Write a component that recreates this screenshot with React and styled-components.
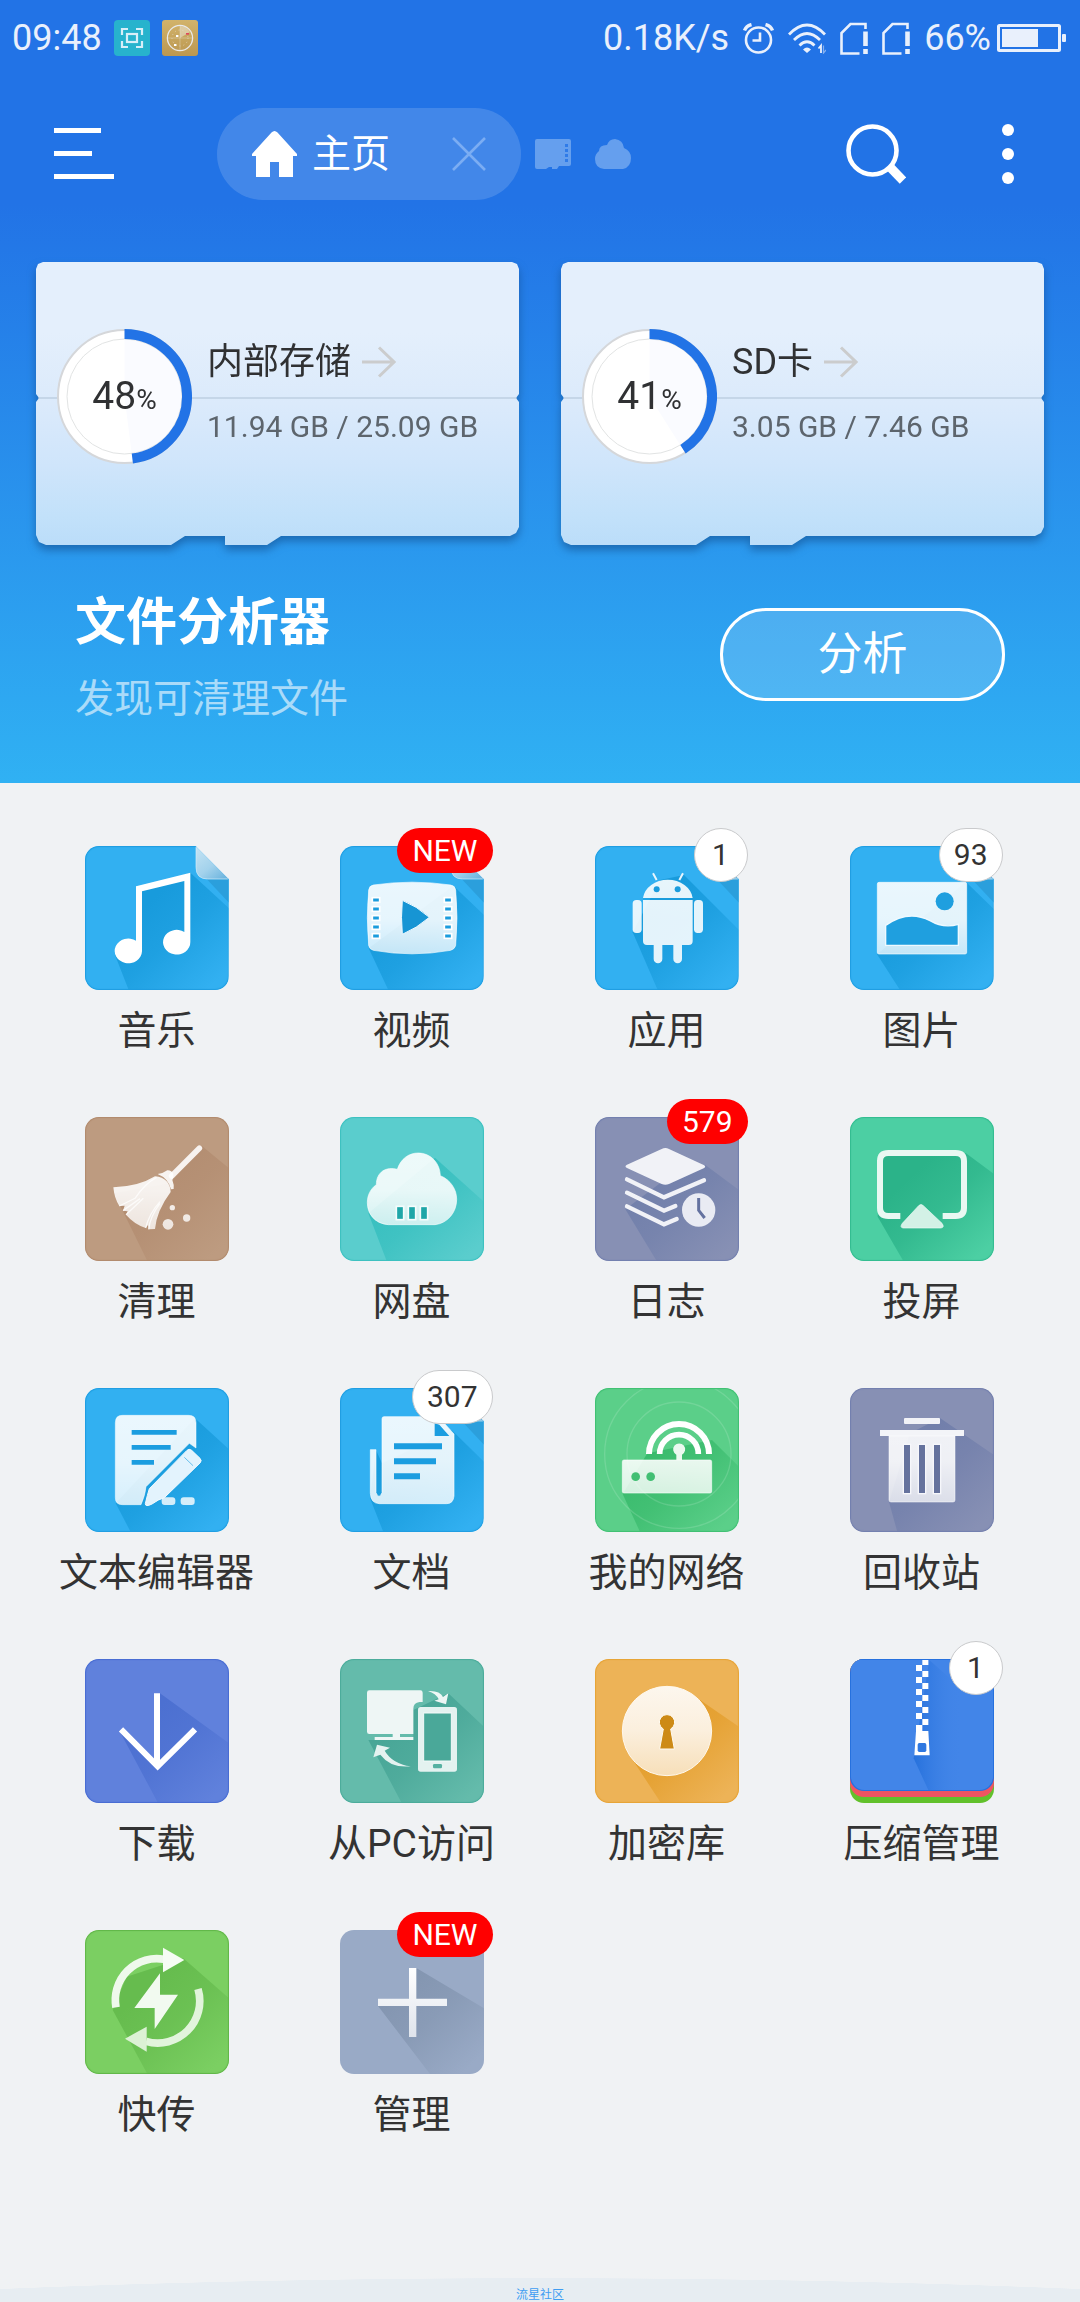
import React from "react";
import styled, { createGlobalStyle } from "styled-components";

const GlobalStyle = createGlobalStyle`
  * { box-sizing: border-box; }
  body {
    margin: 0;
    background: #f0f2f4;
    color: #333;
    font-family: Roboto, "Noto Sans CJK SC", sans-serif;
  }
  button { font: inherit; color: inherit; background: none; border: 0; padding: 0; cursor: pointer; }
  a { color: inherit; text-decoration: none; }
  svg { display: block; }
`;

const Page = styled.div`
  min-height: 100vh;
  display: flex;
  flex-direction: column;
`;

/* ---------- header ---------- */

const Header = styled.header`
  color: #fff;
  background: linear-gradient(#2273e6 26%, #30b1f3);
  padding-bottom: 60px;
`;

const StatusBar = styled.div`
  height: 76px;
  padding: 0 13px 0 12px;
  display: flex;
  align-items: center;
  justify-content: space-between;
  color: #e9f0fc;
  font-size: 36px;
  line-height: 42px;
`;

const StatusGroup = styled.div`
  display: flex;
  align-items: center;
  gap: ${(p) => p.$gap}px;
`;

const Toolbar = styled.nav`
  padding: 32px 66px 62px 54px;
  display: flex;
  align-items: center;
`;

const Tabs = styled.div`
  flex: 1;
  margin-left: 103px;
  display: flex;
  align-items: center;
  gap: 14px;
`;

const ActiveTab = styled.div`
  height: 92px;
  padding: 0 35px;
  border-radius: 46px;
  background: rgba(255, 255, 255, 0.15);
  display: flex;
  align-items: center;
  gap: 62px;
`;

const TabLabel = styled.button`
  display: flex;
  align-items: center;
  gap: 15px;
  font-size: 39px;
  line-height: 48px;
`;

const OtherTabs = styled.div`
  display: flex;
  gap: 24px;
`;

const Actions = styled.div`
  display: flex;
  align-items: center;
  gap: 96px;
`;

/* ---------- storage ---------- */

const Storage = styled.section`
  padding: 0 36px;
  display: grid;
  grid-template-columns: 1fr 1fr;
  gap: 42px;
`;

const CardShadow = styled.a`
  display: block;
  filter: drop-shadow(0 5px 4px rgba(16, 76, 140, 0.6));
`;

const Card = styled.div`
  height: 283px;
  padding: 0 21px 15px;
  display: flex;
  align-items: center;
  gap: 15px;
  color: #303133;
  background:
    linear-gradient(#c5d6e8, #c5d6e8) 0 135px / 100% 2px no-repeat,
    linear-gradient(#e4effc 25%, #dbeafb 50%, #cfe5fb 72%, #c2e1fa 90%, #bbddf9);
  clip-path: polygon(
    0 7px, 2px 2px, 7px 0,
    calc(100% - 7px) 0, calc(100% - 2px) 2px, 100% 7px,
    100% 132px, calc(100% - 3px) 136px, 100% 140px,
    100% 265px, calc(100% - 3px) 271px, calc(100% - 9px) 274px,
    245px 274px, 231px 283px, 189px 283px, 189px 274px, 149px 274px, 135px 283px,
    10px 283px, 3px 280px, 0 273px,
    0 140px, 3px 136px, 0 132px
  );
`;

const Dial = styled.div`
  display: grid;
  place-items: center;
  > * { grid-area: 1 / 1; }
`;

const Percent = styled.span`
  padding-top: 4px;
  font-size: 39px;
  line-height: 48px;
  small { font-size: 28px; }
`;

const CardName = styled.div`
  display: flex;
  align-items: center;
  gap: 11px;
  font-size: 36px;
  line-height: 42px;
`;

const CardUsage = styled.div`
  margin-top: 20px;
  color: #5d656d;
  font-size: 30px;
  line-height: 48px;
  white-space: nowrap;
`;

/* ---------- analyzer ---------- */

const Analyzer = styled.section`
  margin-top: 48px;
  padding: 0 75px;
  display: flex;
  align-items: flex-start;
  justify-content: space-between;
`;

const Title = styled.h1`
  margin: 0 0 22px;
  font-size: 51px;
  line-height: 60px;
  font-weight: 700;
`;

const Subtitle = styled.p`
  margin: 0;
  font-size: 39px;
  line-height: 48px;
  color: rgba(255, 255, 255, 0.6);
`;

const AnalyzeButton = styled.button`
  && {
    width: 285px;
    height: 93px;
    margin-top: 15px;
    border: 3px solid #fff;
    border-radius: 46px;
    background: rgba(255, 255, 255, 0.16);
    font-size: 45px;
    line-height: 48px;
  }
`;

/* ---------- app grid ---------- */

const Grid = styled.main`
  padding: 63px 31px 63px 29px;
  display: grid;
  grid-template-columns: repeat(4, 1fr);
  row-gap: 55px;
`;

const Entry = styled.button`
  display: flex;
  flex-direction: column;
  align-items: center;
  gap: 17px;
  font-size: 39px;
  line-height: 48px;
`;

const EntryLabel = styled.span`
  height: 55px;
  line-height: 48px;
  white-space: nowrap;
`;

const TileFrame = styled.span`
  position: relative;
  display: block;
`;

const Tile = styled.span`
  position: relative;
  display: block;
  width: 144px;
  height: 144px;
  overflow: hidden;
  border-radius: 14px;
  background: ${(p) => p.$bg};
  ${(p) => p.$fold && "clip-path: polygon(0 0, 111px 0, 144px 33px, 144px 144px, 0 144px);"}
  &::after {
    content: "";
    position: absolute;
    inset: 0;
    border-radius: 14px;
    box-shadow: ${(p) => (p.$edge ? `inset 0 0 1px 1px ${p.$edge}` : "none")};
  }
`;

const Badge = styled.span`
  position: absolute;
  top: -18px;
  right: -9px;
  min-width: 54px;
  height: ${(p) => (p.$alert ? 45 : 54)}px;
  padding: 0 ${(p) => (p.$alert ? 15 : 14)}px;
  border: ${(p) => (p.$alert ? "0" : "1px solid #c9cacc")};
  border-radius: 27px;
  display: grid;
  place-items: center;
  background: ${(p) => (p.$alert ? "#f00" : "#fff")};
  color: ${(p) => (p.$alert ? "#fff" : "#333")};
  font-size: 30px;
  line-height: 36px;
`;

const Footer = styled.footer`
  margin-top: auto;
  padding-top: 10px;
  text-align: center;
  color: #3f9df2;
  font-size: 12px;
  line-height: 14px;
  background: radial-gradient(ellipse 150% 190px at 50% 190px, #e7edf2 99.8%, transparent);
`;

/* ---------- header icons ---------- */

const ScanIcon = () => (
  <svg width="36" height="36" viewBox="0 0 36 36" fill="none">
    <rect width="36" height="36" rx="4" fill="#27b3cd" />
    <g stroke="#d8eef8" strokeWidth="2.2">
      <path d="M8 15V9H14M22 9H28V15M28 21V27H22M14 27H8V21" />
      <rect x="13" y="14" width="10" height="8" />
    </g>
  </svg>
);

const RadarIcon = () => (
  <svg width="36" height="36" viewBox="0 0 36 36" fill="none">
    <defs>
      <linearGradient id="gold" x2="0" y2="1">
        <stop stopColor="#d2b36b" />
        <stop offset="1" stopColor="#bb9750" />
      </linearGradient>
    </defs>
    <rect width="36" height="36" rx="3" fill="url(#gold)" />
    <path d="M18 18V6A12 12 0 0 1 28 12Z" fill="#e8e0cc" opacity=".6" />
    <path d="M18 5V31M5 18H31" stroke="#e8e0cc" opacity=".4" />
    <circle cx="18" cy="18" r="8" stroke="#e8e0cc" strokeDasharray="1 3" opacity=".7" />
    <circle cx="18" cy="18" r="12.6" stroke="#e9e9ea" strokeWidth="1.3" />
    <rect x="14" y="15" width="2.4" height="2" fill="#fff" />
    <rect x="12" y="24" width="2.4" height="2" fill="#fff" />
    <rect x="24" y="13" width="3" height="1.6" fill="#e0455c" />
  </svg>
);

const AlarmIcon = () => (
  <svg width="31" height="31" viewBox="0 0 31 31" fill="none" stroke="#e9f0fc">
    <circle cx="15.5" cy="17" r="12.5" strokeWidth="2.6" />
    <path d="M17 9.5V17.5H9.5" strokeWidth="2.6" />
    <path d="M1.5 7.5Q3 3 8.5 1.5M22.5 1.5Q28 3 29.5 7.5" strokeWidth="3.4" />
  </svg>
);

const WifiIcon = () => (
  <svg width="38" height="31" viewBox="0 0 38 31" fill="none" stroke="#e9f0fc" strokeWidth="2.8">
    <path d="M1 11.5Q19 -7.5 37 11.5M6 17Q19 4 32 17M11.5 22.5Q19 15 26.5 22.5" />
    <path d="M19 30L15 26.5Q19 22.5 23 26.5Z" fill="#e9f0fc" stroke="none" />
    <path d="M30.5 25.5L33 22.5V30" strokeWidth="1.8" />
    <path d="M35.5 22.5V30L38 27" strokeWidth="1.2" opacity=".5" />
  </svg>
);

const SimIcon = () => (
  <svg width="28" height="33" viewBox="0 0 28 33" fill="none" stroke="#e9f0fc" strokeWidth="2.6">
    <path d="M25.5 7V2H10.5L1.5 11V31.5H19.5" />
    <path d="M25.5 9.5V24" strokeWidth="4.6" />
    <path d="M25.5 27V32" strokeWidth="4.6" />
  </svg>
);

const BatteryIcon = () => (
  <svg width="70" height="28" viewBox="0 0 70 28" fill="#e9f0fc">
    <rect x="1.5" y="1.5" width="61" height="25" fill="none" stroke="#e9f0fc" strokeWidth="3" rx="1" />
    <rect x="5" y="5" width="36" height="18" />
    <rect x="65" y="10" width="4" height="8" rx="1" />
  </svg>
);

const MenuIcon = () => (
  <svg width="60" height="52" viewBox="0 0 60 52" fill="#fff">
    <rect width="47" height="5" />
    <rect y="23" width="38" height="5" />
    <rect y="46" width="60" height="5" />
  </svg>
);

const HomeIcon = () => (
  <svg width="45" height="46" viewBox="0 0 45 46" fill="#fff">
    <path d="M22.5 0Q24 0 25.5 1.5L45 23V25H41V46H27V31H18V46H4V25H0V23L19.5 1.5Q21 0 22.5 0Z" />
  </svg>
);

const CloseIcon = () => (
  <svg width="34" height="34" viewBox="0 0 34 34" stroke="#7badf3" strokeWidth="2.6">
    <path d="M1 1L33 33M33 1L1 33" />
  </svg>
);

const SdIcon = () => (
  <svg width="36" height="30" viewBox="0 0 36 30" fill="#659fee">
    <path d="M2 0H34Q36 0 36 2V25Q36 27 34 27H24L22 30H17V28H14L11 30H2Q0 30 0 28V2Q0 0 2 0Z" />
    <path d="M30 5H33V8H30ZM30 10H33V13H30ZM30 15H33V18H30ZM30 20H33V23H30Z" fill="#2f7be8" />
  </svg>
);

const CloudIcon = () => (
  <svg width="36" height="30" viewBox="0 0 36 30" fill="#659fee">
    <path d="M9 30Q0 29 0 20Q0 15 4 12Q4 6 12 6Q14 0 20 0Q28 1 29 9Q36 12 36 19Q36 28 28 30Z" />
  </svg>
);

const SearchIcon = () => (
  <svg width="60" height="60" viewBox="0 0 60 60" fill="none" stroke="#fff">
    <circle cx="26.5" cy="26.5" r="24" strokeWidth="4.6" />
    <path d="M43 42L57 56.5" strokeWidth="9" />
  </svg>
);

const MoreIcon = () => (
  <svg width="12" height="60" viewBox="0 0 12 60" fill="#fff">
    <circle cx="6" cy="6" r="6" />
    <circle cx="6" cy="30" r="6" />
    <circle cx="6" cy="54" r="6" />
  </svg>
);

const ArrowIcon = () => (
  <svg width="34" height="32" viewBox="0 0 34 32" fill="none" stroke="#cbcccd" strokeWidth="3">
    <path d="M0 16H32M17 1.5L32 16L17 30.5" />
  </svg>
);

const Ring = ({ value }) => {
  const angle = (value / 100) * Math.PI * 2;
  const at = (r) => `${67.5 + r * Math.sin(angle)} ${67.5 - r * Math.cos(angle)}`;
  return (
    <svg width="135" height="135" viewBox="0 0 135 135" fill="none">
      <circle cx="67.5" cy="67.5" r="66.5" fill="#fff" stroke="#d5d7da" strokeWidth="2" />
      <path d={`M67.5 67.5V10.5A57 57 0 0 1 ${at(57)}Z`} fill="#fafbff" />
      <circle cx="67.5" cy="67.5" r="57.5" stroke="#e2e4e4" />
      <path d={`M67.5 5A62.5 62.5 0 0 1 ${at(62.5)}`} stroke="#2273e6" strokeWidth="10" />
    </svg>
  );
};

/* ---------- tile icons ---------- */

/* Three icon pixels make one screen pixel; x and y set the artboard corner. */
const Art = ({ id, x, y, shade, shadow, fade = 0.7, children }) => (
  <svg width="144" height="144" viewBox={`${x} ${y} 432 432`} fill={`url(#${id}-ink)`}>
    <defs>
      <linearGradient id={`${id}-ink`} gradientUnits="userSpaceOnUse" x1="0" y1={y + 90} x2="0" y2={y + 350}>
        <stop stopColor="#fff" stopOpacity=".9" />
        <stop offset=".5" stopColor="#fff" stopOpacity=".88" />
        <stop offset="1" stopColor="#fff" stopOpacity={fade} />
      </linearGradient>
      <linearGradient
        id={`${id}-shade`} gradientUnits="userSpaceOnUse"
        x1={x + 170} y1={y + 190} x2={x + 380} y2={y + 420}
      >
        <stop stopColor={shade} />
        <stop offset=".4" stopColor={shade} stopOpacity=".75" />
        <stop offset="1" stopColor={shade} stopOpacity="0" />
      </linearGradient>
    </defs>
    <polygon points={shadow} fill={`url(#${id}-shade)`} />
    {children}
  </svg>
);

const Fold = ({ x, y }) => (
  <g transform={`translate(${x} ${y})`}>
    <defs>
      <linearGradient id="fold" x1="0" y1="0" x2=".8" y2="1">
        <stop stopColor="#c6e4f4" />
        <stop offset=".6" stopColor="#a3d2ec" />
        <stop offset="1" stopColor="#6fb6df" />
      </linearGradient>
    </defs>
    <path d="M365 99H432V170Z" fill="#2b9fdc" />
    <path d="M333 0L432 99H368Q333 99 333 64Z" fill="url(#fold)" stroke="#d8eefa" strokeWidth="2" />
  </g>
);

const BLUE = "#189bdc";

const MusicArt = () => (
  <Art id="music" x={75} y={78} shade={BLUE} shadow="246,205 391,158 507,265 507,510 206,510 165,405 246,394">
    <Fold x={75} y={78} />
    <path
      fill="#fff"
      d="M228 199L391 158V366A41 37 0 1 1 373 336V183L246 214V394A41 37 0 1 1 228 362Z"
    />
  </Art>
);

const VideoArt = () => (
  <Art id="video" x={840} y={78} shade={BLUE} shadow="1180,197 1272,285 1272,510 985,510 926,385">
    <Fold x={840} y={78} />
    <path
      stroke="#fff" strokeOpacity=".6" strokeWidth="3"
      d="M940 195Q1056 178 1172 195Q1185 197 1187 210Q1195 293 1187 376Q1185 387 1172 391Q1056 412 940 391Q928 388 926 376Q918 293 926 210Q928 197 940 195Z"
    />
    <path fill="#1795d4" stroke="#eef9ff" strokeWidth="3" d="M1027 241Q1022 292 1027 343Q1070 325 1108 292Q1070 258 1027 241Z" />
    <g fill="#1b9cdd" stroke="#fff" strokeWidth="5">
      {[233, 260, 287, 314, 341].map((y) => (
        <React.Fragment key={y}>
          <rect x="937" y={y} width="22" height="14" />
          <rect x="1153" y={y} width="22" height="14" />
        </React.Fragment>
      ))}
    </g>
  </Art>
);

const AndroidArt = () => (
  <Art id="android" x={105} y={78} shade={BLUE} fade={0.88} shadow="372,165 537,330 537,510 293,510 218,337 300,180">
    <Fold x={105} y={78} />
    <path d="M249 234A75 62 0 0 1 398 234Z" />
    <path d="M249 240H398V363Q398 375 386 375H366V417A13 13 0 0 1 340 417V375H307V417A13 13 0 0 1 281 417V375H261Q249 375 249 363Z" />
    <rect x="218" y="240" width="27" height="99" rx="11" />
    <rect x="402" y="240" width="27" height="99" rx="11" />
    <path d="M279 160L290 180M369 160L358 180" stroke="#e8f5fd" strokeWidth="6" />
    <path d="M249 237H398" stroke="#1b9cdd" strokeWidth="3" />
    <circle cx="290" cy="208" r="9" fill="#1b9cdd" />
    <circle cx="353" cy="208" r="9" fill="#1b9cdd" />
  </Art>
);

const PhotoArt = () => (
  <Art id="photo" x={870} y={78} shade={BLUE} shadow="1218,186 1302,268 1302,510 1020,510 951,403">
    <Fold x={870} y={78} />
    <rect x="952" y="187" width="268" height="215" rx="5" stroke="#fff" strokeOpacity=".6" strokeWidth="3" />
    <path fill="#1f9fdf" stroke="#eef9ff" strokeWidth="4" d="M977 316Q1045 268 1110 302Q1150 326 1195 313V376H977Z" />
    <circle cx="1154" cy="244" r="27" fill="#1f9fdf" />
  </Art>
);

const BroomArt = () => (
  <Art id="broom" x={75} y={81} shade="#b38d71" fade={0.75} shadow="426,168 507,235 507,513 262,513 162,310 330,280">
    <path d="M418 175L335 258" stroke="#f7f2ef" strokeWidth="17" strokeLinecap="round" />
    <path d="M293 252Q310 250 322 241Q334 240 340 252Q342 262 337 270Q343 285 341 297L333 298Q325 265 293 252Z" />
    <path d="M160 292Q235 290 285 259Q330 264 332 306Q290 362 285 417L266 418L264 405L257 414Q222 402 198 374L203 364L189 362L194 347L178 348Q163 325 160 292Z" />
    <path
      d="M178 348L225 325Q255 280 290 262M198 374L250 325M257 414Q268 370 300 335M266 418Q270 380 300 340M189 362L240 326"
      fill="none" stroke="#fff" strokeOpacity=".75" strokeWidth="4"
    />
    <circle cx="337" cy="353" r="8" />
    <circle cx="324" cy="403" r="16" />
    <circle cx="380" cy="384" r="11" />
  </Art>
);

const CloudArt = () => (
  <Art id="cloud" x={840} y={81} shade="#37bfbf" shadow="1125,203 1272,335 1272,513 980,513 925,370">
    <path
      stroke="#fff" strokeOpacity=".6" strokeWidth="3"
      d="M985 404C943 401 922 370 922 338C922 315 932 296 949 284C949 246 978 229 1012 238C1022 206 1047 189 1075 189C1112 189 1140 219 1141 257C1172 270 1190 298 1190 328C1190 368 1162 400 1125 404Z"
    />
    <g fill="#1fa6a8" stroke="#f4fcfc" strokeWidth="5">
      <rect x="1009" y="349" width="22" height="40" />
      <rect x="1045" y="349" width="22" height="40" />
      <rect x="1081" y="349" width="22" height="40" />
    </g>
  </Art>
);

const LogArt = () => (
  <Art id="log" x={105} y={81} shade="#7280ab" fade={0.75} shadow="436,225 537,300 537,513 290,513 196,358 300,280">
    <path d="M305 177Q316 171 327 177L431 225Q440 230 431 235L327 282Q316 287 305 282L201 234Q192 229 201 224Z" fill="#f1f2f7" />
    <g fill="none" stroke="#f1f2f7" strokeWidth="13" strokeLinecap="round">
      <path d="M201 268L312 322L432 271" />
      <path d="M201 308L312 362L346 348" />
      <path d="M201 349L312 403L350 387" />
    </g>
    <circle cx="416" cy="360" r="50" fill="#e9ebf3" />
    <path d="M416 324V361L434 384" fill="none" stroke="#6472a0" strokeWidth="9" />
  </Art>
);

const CastArt = () => (
  <Art id="cast" x={870} y={81} shade="#2bb389" fade={0.75} shadow="1218,190 1302,252 1302,513 1030,513 953,380 960,190">
    <path
      fill="none" stroke="#e9f8f2" strokeWidth="18"
      d="M1021 378H985Q960 378 960 354V213Q960 189 985 189H1187Q1212 189 1212 213V354Q1212 378 1187 378H1148"
    />
    <path d="M1076 347Q1083 340 1090 347L1146 400Q1155 413 1142 414H1030Q1018 413 1027 400Z" fill="#d3f1e6" stroke="#effaf6" strokeWidth="2" />
  </Art>
);

const EditorArt = () => (
  <Art id="editor" x={75} y={894} shade={BLUE} fade={0.8} shadow="405,985 507,1078 507,1326 212,1326 167,1240">
    <path
      stroke="#fff" strokeOpacity=".5" strokeWidth="3"
      d="M187 976H386Q408 976 408 998V1074L388 1060L258 1190Q256 1215 243 1244H187Q166 1244 166 1223V998Q166 976 187 976Z"
    />
    <path fill="#1b9de0" d="M215 1020H350V1034H215ZM215 1065H332V1079H215ZM215 1110H282V1124H215Z" />
    <rect x="305" y="1222" width="41" height="23" rx="9" />
    <rect x="362" y="1222" width="42" height="23" rx="9" />
    <path
      fill="#e3f3fd" stroke="#f3fafe" strokeWidth="3"
      d="M380 1082Q387 1074 395 1081L420 1105Q427 1112 420 1119L313 1223Q295 1228 276 1242Q256 1252 256 1241Q262 1215 268 1196Z"
    />
    <path d="M373 1102L399 1127" stroke="#2ba4e2" strokeWidth="2" />
  </Art>
);

const DocsArt = () => (
  <Art id="docs" x={840} y={894} shade={BLUE} fade={0.8} shadow="1175,1020 1272,1115 1272,1326 970,1326 930,1225 948,1080 966,1120">
    <Fold x={840} y={894} />
    <path
      stroke="#fff" strokeOpacity=".6" strokeWidth="3"
      d="M972 980H1135L1182 1032V1218Q1180 1241 1160 1241H958Q932 1240 931 1210V1079H948V1208Q957 1230 966 1208V986Q966 980 972 980Z"
    />
    <path fill="#1b9de0" d="M1124 1000V1038H1168L1138 1004ZM1002 1060H1146V1078H1002ZM1002 1105H1128V1123H1002ZM1002 1150H1080V1168H1002Z" />
  </Art>
);

const NetworkArt = () => (
  <Art id="network" x={105} y={894} shade="#3abb6d" fade={0.75} shadow="456,1050 537,1130 537,1326 240,1326 188,1212 262,1090">
    <g fill="none" stroke="#fff" strokeOpacity=".14" strokeWidth="4">
      <circle cx="357" cy="1092" r="156" />
      <circle cx="357" cy="1092" r="223" />
    </g>
    <g fill="none" stroke="#fff">
      <path d="M267 1092A90 90 0 0 1 447 1092" strokeWidth="18" />
      <path d="M299 1092A58 58 0 0 1 415 1092" strokeWidth="17" />
    </g>
    <path d="M349 1110V1094A18 18 0 1 1 366 1094V1110Z" fill="#ebf9f0" />
    <rect x="187" y="1110" width="268" height="99" rx="5" stroke="#fff" strokeOpacity=".6" strokeWidth="3" />
    <circle cx="227" cy="1160" r="13" fill="#42bf73" />
    <circle cx="272" cy="1160" r="13" fill="#42bf73" />
  </Art>
);

const TrashArt = () => (
  <Art id="trash" x={870} y={894} shade="#727fab" fade={0.72} shadow="1140,984 1302,1095 1302,1326 1012,1326 987,1236 1050,1030">
    <rect x="1032" y="984" width="108" height="18" rx="3" fill="#f1f2f7" />
    <path d="M960 1020H1212V1038H960Z" fill="#f3f4f8" />
    <path d="M987 1038H1185V1230Q1185 1236 1179 1236H993Q987 1236 987 1230Z" stroke="#fff" strokeOpacity=".5" strokeWidth="3" />
    <g fill="#65729d" stroke="#f6f7fb" strokeWidth="4">
      <rect x="1030" y="1063" width="22" height="148" />
      <rect x="1075" y="1063" width="22" height="148" />
      <rect x="1120" y="1063" width="22" height="148" />
    </g>
  </Art>
);

const DownloadArt = () => (
  <Art id="download" x={75} y={87} shade="#4c70d1" shadow="300,190 507,340 507,519 294,519 177,300 293,400">
    <path d="M291 190V400M183 298L293 409L405 298" fill="none" stroke="#fff" strokeWidth="18" />
  </Art>
);

const PcArt = () => (
  <Art id="pc" x={840} y={87} shade="#48a697" fade={0.75} shadow="1165,190 1272,290 1272,519 1025,519 925,330 1060,330 1060,240">
    <path d="M928 181H1081Q1088 181 1088 188V216H1079Q1060 218 1060 236V312H1020V321H1060V330H944V321H998V312H928Q921 312 921 305V188Q921 181 928 181Z" fill="#eef6f5" />
    <rect x="1074" y="231" width="117" height="194" rx="8" fill="#e4f2f0" />
    <rect x="1091" y="249" width="83" height="144" fill="#4aa899" stroke="#f4faf9" strokeWidth="3" />
    <rect x="1119" y="402" width="27" height="13" rx="4" fill="#56b1a2" />
    <path d="M1104 183Q1140 181 1149 201L1165 190L1158 223L1123 212L1136 208Q1128 190 1104 183Z" />
    <path d="M1052 409Q992 415 961 374L940 382L951 344L990 353L974 362Q998 402 1052 409Z" fill="#e4f2f0" />
  </Art>
);

const SafeArt = () => (
  <Art id="safe" x={105} y={87} shade="#e39d2a" shadow="420,210 537,290 537,519 303,519 215,385">
    <defs>
      <linearGradient id="cream" x2="0" y2="1">
        <stop stopColor="#fdf7ee" />
        <stop offset=".5" stopColor="#fbefdd" />
        <stop offset="1" stopColor="#f7dfb9" />
      </linearGradient>
    </defs>
    <circle cx="321" cy="303" r="134" fill="url(#cream)" stroke="#fff8ec" strokeWidth="3" />
    <path d="M310 297A23 23 0 1 1 332 297L343 357H299Z" fill="#cd8a16" stroke="#fffaf0" strokeWidth="3" />
  </Art>
);

const ZipArt = () => (
  <Art id="zip" x={870} y={87} shade="#62c12b" shadow="">
    <defs>
      <linearGradient id="zip-dark" x1="0" x2="1">
        <stop stopColor="#2671dc" />
        <stop offset=".6" stopColor="#4285e8" stopOpacity="0" />
      </linearGradient>
    </defs>
    <rect x="870" y="47" width="432" height="454" rx="42" fill="#ef5462" />
    <rect x="870" y="47" width="432" height="436" rx="42" fill="#2671de" />
    <rect x="873" y="50" width="426" height="430" rx="40" fill="#4285e8" />
    <path d="M1108 90L1299 260V480H1105L1061 385Z" fill="url(#zip-dark)" />
    <g fill="#fff">
      <rect x="1087" y="90" width="18" height="15" />
      {[123, 159, 195, 231, 267].map((y) => (
        <React.Fragment key={y}>
          <rect x="1087" y={y} width="18" height="18" />
          <rect x="1068" y={y - 18} width="18" height="18" />
        </React.Fragment>
      ))}
      <path d="M1068 285H1087V303H1105L1109 376H1063L1068 303Z" />
    </g>
    <rect x="1073" y="339" width="26" height="27" rx="5" fill="#2f78e0" />
    <rect x="870" y="87" width="432" height="3" fill="#2671de" />
  </Art>
);

const TransferArt = () => (
  <Art id="transfer" x={75} y={900} shade="#66bc4e" fade={0.75} shadow="370,985 507,1105 507,1332 262,1332 158,1140 200,1040">
    <g fill="none" stroke="#eff9ec" strokeWidth="23">
      <path d="M168 1132A124 124 0 0 1 312 988" />
      <path d="M414 1077A126 126 0 0 1 258 1234" stroke="#e2f4dc" />
    </g>
    <path d="M309 953L373 990L309 1027Z" fill="#f6fcf4" />
    <path d="M260 1190L195 1226L260 1265Z" fill="#dcf1d5" />
    <path d="M300 1030V1094H354L284 1197V1134H223Z" fill="#f2faf0" />
  </Art>
);

const ManageArt = () => (
  <Art id="manage" x={840} y={900} shade="#8496b1" shadow="1069,1014 1272,1135 1272,1332 1110,1332 954,1128 1047,1106">
    <defs>
      <linearGradient id="plus" x2="0" y2="1">
        <stop stopColor="#fff" />
        <stop offset="1" stopColor="#dfe4ec" />
      </linearGradient>
    </defs>
    <path d="M1047 1014H1069V1106H1161V1128H1069V1221H1047V1128H954V1106H1047Z" fill="url(#plus)" />
  </Art>
);

/* ---------- data ---------- */

const volumes = [
  { name: "内部存储", percent: 48, usage: "11.94 GB / 25.09 GB", href: "#internal" },
  { name: "SD卡", percent: 41, usage: "3.05 GB / 7.46 GB", href: "#sdcard" },
];

const sky = { bg: "#32b0f1", edge: "#1f9de0" };
const slate = { bg: "#8790b4", edge: "#727fae" };

const entries = [
  { label: "音乐", art: MusicArt, fold: true, ...sky },
  { label: "视频", art: VideoArt, fold: true, badge: "NEW", alert: true, ...sky },
  { label: "应用", art: AndroidArt, fold: true, badge: "1", ...sky },
  { label: "图片", art: PhotoArt, fold: true, badge: "93", ...sky },
  { label: "清理", art: BroomArt, bg: "#bd9b80", edge: "#b18a6c" },
  { label: "网盘", art: CloudArt, bg: "#5acdcd", edge: "#3bc0bf" },
  { label: "日志", art: LogArt, badge: "579", alert: true, ...slate },
  { label: "投屏", art: CastArt, bg: "#4ccfa3", edge: "#32bb8f" },
  { label: "文本编辑器", art: EditorArt, ...sky },
  { label: "文档", art: DocsArt, fold: true, badge: "307", ...sky },
  { label: "我的网络", art: NetworkArt, bg: "#5bcf89", edge: "#3fbf72" },
  { label: "回收站", art: TrashArt, ...slate },
  { label: "下载", art: DownloadArt, bg: "#6081dc", edge: "#476bd2" },
  { label: "从PC访问", art: PcArt, bg: "#64bbab", edge: "#4aab9a" },
  { label: "加密库", art: SafeArt, bg: "#edb357", edge: "#e6a335" },
  { label: "压缩管理", art: ZipArt, bg: "#62c12b", badge: "1" },
  { label: "快传", art: TransferArt, bg: "#7bcf62", edge: "#60b548" },
  { label: "管理", art: ManageArt, bg: "#99aac6", badge: "NEW", alert: true },
];

export default function App() {
  return (
    <Page>
      <GlobalStyle />
      <Header>
        <StatusBar>
          <StatusGroup $gap={12}>
            <span>09:48</span>
            <ScanIcon />
            <RadarIcon />
          </StatusGroup>
          <StatusGroup $gap={14}>
            <span>0.18K/s</span>
            <AlarmIcon />
            <WifiIcon />
            <SimIcon />
            <SimIcon />
            <StatusGroup $gap={6}>
              <span>66%</span>
              <BatteryIcon />
            </StatusGroup>
          </StatusGroup>
        </StatusBar>

        <Toolbar>
          <button aria-label="菜单"><MenuIcon /></button>
          <Tabs>
            <ActiveTab>
              <TabLabel><HomeIcon />主页</TabLabel>
              <button aria-label="关闭"><CloseIcon /></button>
            </ActiveTab>
            <OtherTabs>
              <button aria-label="SD卡"><SdIcon /></button>
              <button aria-label="网盘"><CloudIcon /></button>
            </OtherTabs>
          </Tabs>
          <Actions>
            <button aria-label="搜索"><SearchIcon /></button>
            <button aria-label="更多"><MoreIcon /></button>
          </Actions>
        </Toolbar>

        <Storage>
          {volumes.map((v) => (
            <CardShadow key={v.name} href={v.href}>
              <Card>
                <Dial>
                  <Ring value={v.percent} />
                  <Percent>{v.percent}<small>%</small></Percent>
                </Dial>
                <div>
                  <CardName>{v.name}<ArrowIcon /></CardName>
                  <CardUsage>{v.usage}</CardUsage>
                </div>
              </Card>
            </CardShadow>
          ))}
        </Storage>

        <Analyzer>
          <div>
            <Title>文件分析器</Title>
            <Subtitle>发现可清理文件</Subtitle>
          </div>
          <AnalyzeButton>分析</AnalyzeButton>
        </Analyzer>
      </Header>

      <Grid>
        {entries.map(({ label, art: Picture, bg, edge, fold, badge, alert }) => (
          <Entry key={label}>
            <TileFrame>
              <Tile $bg={bg} $edge={edge} $fold={fold}><Picture /></Tile>
              {badge && <Badge $alert={alert}>{badge}</Badge>}
            </TileFrame>
            <EntryLabel>{label}</EntryLabel>
          </Entry>
        ))}
      </Grid>

      <Footer>流星社区</Footer>
    </Page>
  );
}
